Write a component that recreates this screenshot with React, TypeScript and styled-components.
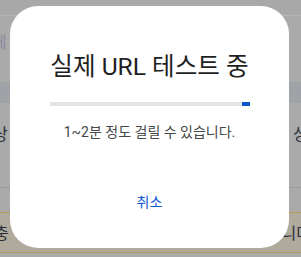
import React from 'react';
import styled, { createGlobalStyle } from 'styled-components';

const GlobalStyle = createGlobalStyle`
  html, body {
    margin: 0;
    padding: 0;
    width: 301px;
    height: 257px;
    overflow: hidden;
    font-family: Roboto, "Noto Sans CJK KR", sans-serif;
  }
`;

const Page = styled.div`
  position: relative;
  width: 301px;
  height: 257px;
  overflow: hidden;
  background: #aaaaaa;
  display: flex;
  flex-direction: column;
`;

const TopBar = styled.div`
  height: 15px;
  background: #a9a9a9;
  border-bottom: 1px solid #b6b6b6;
`;

const SearchRow = styled.div`
  height: 66px;
  display: flex;
  align-items: flex-start;
  padding-top: 17px;
  box-sizing: border-box;
  overflow: hidden;
`;

const Placeholder = styled.span`
  font-size: 16px;
  line-height: 20px;
  color: #8b879c;
  margin-left: -8px;
`;

const Band = styled.div`
  height: 21px;
  background: #9fa2a6;
`;

const ListRow = styled.div<{ $h: number; $top: number; $line?: string }>`
  height: ${(p) => p.$h}px;
  box-sizing: border-box;
  padding-top: ${(p) => p.$top}px;
  display: flex;
  justify-content: space-between;
  align-items: flex-start;
  overflow: hidden;
  border-bottom: ${(p) => (p.$line ? `1px solid ${p.$line}` : 'none')};
`;

const Highlight = styled(ListRow)`
  background: #b0aa9c;
  border-top: 1px solid #b49c5c;
`;

const EdgeText = styled.span<{ $shift: number }>`
  font-size: 16px;
  line-height: 20px;
  color: #2a2f3a;
  margin-left: ${(p) => (p.$shift < 0 ? p.$shift : 0)}px;
  margin-right: ${(p) => (p.$shift > 0 ? -p.$shift : 0)}px;
  white-space: nowrap;
`;

const Dialog = styled.div`
  position: absolute;
  left: 10px;
  top: 6px;
  width: 279px;
  height: 242px;
  box-sizing: border-box;
  background: #ffffff;
  border-radius: 28px;
  display: flex;
  flex-direction: column;
  align-items: center;
  padding: 45px 30px 0;
`;

const Title = styled.h1`
  margin: 0;
  font-size: 24.6px;
  line-height: 32px;
  font-weight: 400;
  color: #1f1f1f;
  white-space: nowrap;
`;

const Track = styled.div`
  margin-top: 19px;
  width: 200px;
  height: 4px;
  background: #e1e3e1;
  display: flex;
  justify-content: flex-end;
`;

const Indicator = styled.div`
  height: 4px;
  background: #0b57d0;
`;

const Message = styled.p`
  margin: 16px 0 0;
  font-size: 14px;
  line-height: 20px;
  color: #444746;
  white-space: nowrap;
`;

const TextButton = styled.button`
  margin-top: 39px;
  height: 40px;
  padding: 0 12px;
  border: none;
  background: transparent;
  font-family: inherit;
  font-size: 14px;
  color: #0b57d0;
  cursor: pointer;
`;

export default function App() {
  const progress = 4;
  return (
    <>
      <GlobalStyle />
      <Page>
        <TopBar />
        <SearchRow>
          <Placeholder>테</Placeholder>
        </SearchRow>
        <Band />
        <ListRow $h={85} $top={22} $line="#9c9c9c">
          <EdgeText $shift={-7}>상</EdgeText>
          <EdgeText $shift={7}>상</EdgeText>
        </ListRow>
        <ListRow $h={24} $top={0} />
        <Highlight $h={41} $top={11} $line="#b49c5c">
          <EdgeText $shift={-6}>충</EdgeText>
          <EdgeText $shift={10}>니다</EdgeText>
        </Highlight>
        <Dialog role="dialog">
          <Title>실제 URL 테스트 중</Title>
          <Track>
            <Indicator style={{ width: `${progress}%` }} />
          </Track>
          <Message>1~2분 정도 걸릴 수 있습니다.</Message>
          <TextButton>취소</TextButton>
        </Dialog>
      </Page>
    </>
  );
}
